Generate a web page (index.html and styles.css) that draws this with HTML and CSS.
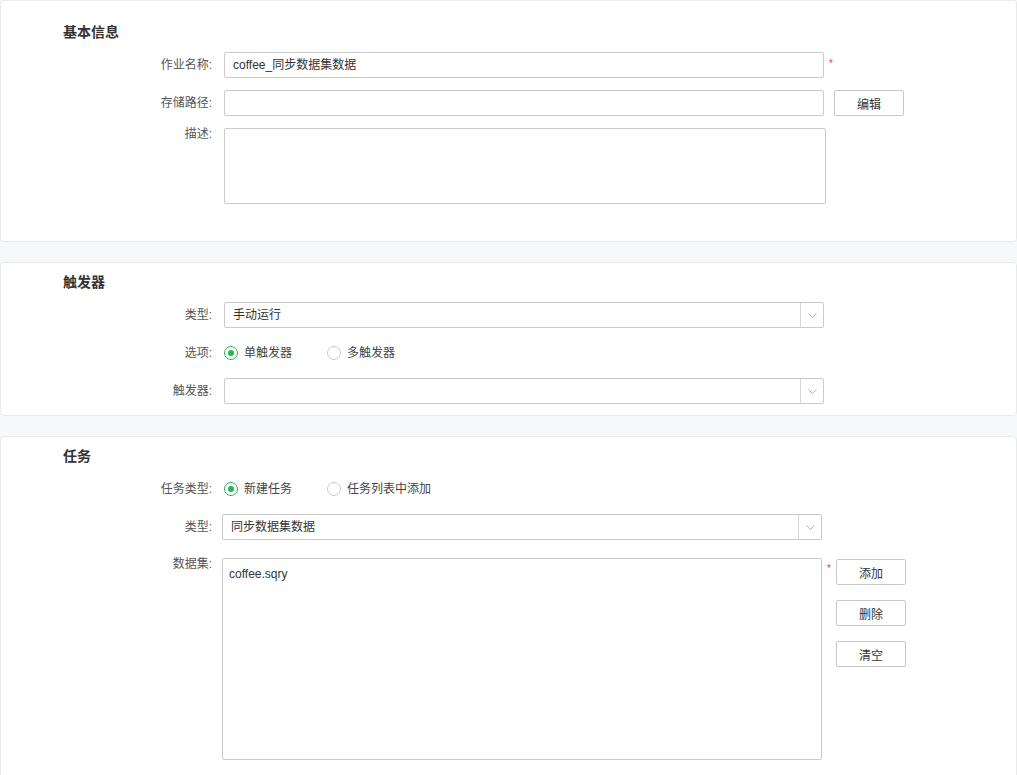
FILE: index.html
```html
<!DOCTYPE html>
<html lang="zh">
<head>
<meta charset="utf-8">
<title>作业</title>
<link rel="stylesheet" href="styles.css">
</head>
<body>
<div class="page">
  <section class="card card-first">
    <h2 class="card-title">基本信息</h2>
    <div class="row">
      <label class="lbl">作业名称:</label>
      <div class="input">coffee_同步数据集数据</div>
      <span class="req">*</span>
    </div>
    <div class="row">
      <label class="lbl">存储路径:</label>
      <div class="input"></div>
      <button class="btn btn-edit">编辑</button>
    </div>
    <div class="row row-top">
      <label class="lbl">描述:</label>
      <div class="textarea"></div>
    </div>
  </section>

  <section class="card card-trigger">
    <h2 class="card-title">触发器</h2>
    <div class="row">
      <label class="lbl">类型:</label>
      <div class="select"><span class="select-text">手动运行</span><span class="select-arrow"><svg width="9" height="5" viewBox="0 0 9 5"><path d="M0.5 0.5 L4.5 4.5 L8.5 0.5" fill="none" stroke="#b5b5b5" stroke-width="1"/></svg></span></div>
    </div>
    <div class="row">
      <label class="lbl">选项:</label>
      <div class="radios">
        <span class="radio-opt"><span class="radio checked"></span>单触发器</span>
        <span class="radio-opt"><span class="radio"></span>多触发器</span>
      </div>
    </div>
    <div class="row">
      <label class="lbl">触发器:</label>
      <div class="select"><span class="select-text"></span><span class="select-arrow"><svg width="9" height="5" viewBox="0 0 9 5"><path d="M0.5 0.5 L4.5 4.5 L8.5 0.5" fill="none" stroke="#b5b5b5" stroke-width="1"/></svg></span></div>
    </div>
  </section>

  <section class="card card-task">
    <h2 class="card-title">任务</h2>
    <div class="row">
      <label class="lbl">任务类型:</label>
      <div class="radios">
        <span class="radio-opt"><span class="radio checked"></span>新建任务</span>
        <span class="radio-opt"><span class="radio"></span>任务列表中添加</span>
      </div>
    </div>
    <div class="row">
      <label class="lbl lbl-task">类型:</label>
      <div class="select"><span class="select-text">同步数据集数据</span><span class="select-arrow"><svg width="9" height="5" viewBox="0 0 9 5"><path d="M0.5 0.5 L4.5 4.5 L8.5 0.5" fill="none" stroke="#b5b5b5" stroke-width="1"/></svg></span></div>
    </div>
    <div class="row row-top row-dataset">
      <label class="lbl lbl-task">数据集:</label>
      <div class="listbox"><div class="list-item">coffee.sqry</div></div>
      <span class="req req-list">*</span>
      <div class="btn-col">
        <button class="btn">添加</button>
        <button class="btn">删除</button>
        <button class="btn">清空</button>
      </div>
    </div>
  </section>
</div>
</body>
</html>
```
FILE: styles.css
```css
html, body {
  margin: 0;
  padding: 0;
}
body {
  background: #f7f8fa;
  font-family: "Liberation Sans", "Noto Sans CJK SC", sans-serif;
  font-size: 12px;
  color: #333;
  width: 1017px;
  height: 775px;
  overflow: hidden;
}
.page {
  display: flex;
  flex-direction: column;
  gap: 20px;
}
.card {
  background: #fff;
  border: 1px solid #e8e9eb;
  border-radius: 4px;
  display: flex;
  flex-direction: column;
  gap: 12px;
}
.card-first {
  border-top-color: #ececec;
  padding: 21px 0 37px;
}
.card-trigger {
  padding: 9px 0 11px;
}
.card-task {
  padding: 9px 0 40px;
}
.card-title {
  margin: 0 0 -2px 62px;
  font-size: 14px;
  line-height: 20px;
  font-weight: bold;
  color: #333;
}
.row {
  display: flex;
  align-items: center;
  min-height: 26px;
}
.row-top {
  align-items: flex-start;
}
.lbl {
  width: 211px;
  text-align: right;
  color: #555;
  font-size: 12px;
  line-height: 12px;
  margin-right: 12px;
  flex: none;
}
.lbl-task {
  margin-right: 10px;
}
.input {
  box-sizing: border-box;
  width: 600px;
  height: 26px;
  border: 1px solid #cacaca;
  border-radius: 2px;
  padding: 0 8px;
  line-height: 24px;
  color: #333;
  font-size: 12px;
}
.req {
  color: #f04134;
  font-size: 10px;
  line-height: 10px;
  margin-left: 5px;
  align-self: flex-start;
  margin-top: 7px;
}
.btn {
  box-sizing: border-box;
  width: 70px;
  height: 26px;
  background: #fff;
  border: 1px solid #c8c8c8;
  border-radius: 2px;
  font-family: "Liberation Sans", "Noto Sans CJK SC", sans-serif;
  font-size: 12px;
  color: #333;
  padding: 0;
  cursor: pointer;
}
.btn-edit {
  margin-left: 10px;
}
.textarea {
  box-sizing: border-box;
  width: 602px;
  height: 76px;
  border: 1px solid #cacaca;
  border-radius: 2px;
}
.select {
  box-sizing: border-box;
  width: 600px;
  height: 26px;
  border: 1px solid #cacaca;
  border-radius: 2px;
  display: flex;
  align-items: stretch;
}
.select-text {
  flex: 1;
  padding: 0 8px;
  line-height: 24px;
  color: #333;
}
.select-arrow {
  width: 22px;
  border-left: 1px solid #d6d6d6;
  display: flex;
  align-items: center;
  justify-content: center;
}
.radios {
  display: flex;
  align-items: center;
}
.radio-opt {
  display: flex;
  align-items: center;
  color: #444;
  line-height: 16px;
  margin-right: 35px;
}
.radio {
  box-sizing: border-box;
  width: 14px;
  height: 14px;
  border: 1px solid #c9c9c9;
  border-radius: 50%;
  margin-right: 6px;
  display: inline-flex;
  align-items: center;
  justify-content: center;
}
.radio.checked {
  border-color: #2bb558;
}
.radio.checked::after {
  content: "";
  width: 6px;
  height: 6px;
  border-radius: 50%;
  background: #2bb558;
}
.row-dataset {
  margin-top: 6px;
}
.listbox {
  box-sizing: border-box;
  width: 600px;
  height: 202px;
  border: 1px solid #cacaca;
  border-radius: 2px;
  padding: 7px 6px;
}
.list-item {
  line-height: 16px;
  color: #333;
}
.req-list {
  margin-left: 5px;
  margin-top: 6px;
}
.btn-col {
  margin-left: 5px;
  margin-top: 1px;
  display: flex;
  flex-direction: column;
  gap: 15px;
}
```
